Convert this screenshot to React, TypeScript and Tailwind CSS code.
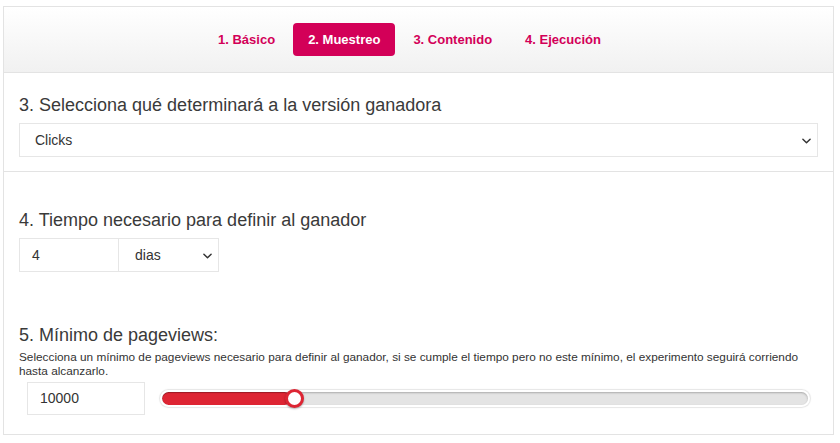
import React from 'react';

const Chevron: React.FC<{ className?: string }> = ({ className }) => (
  <svg viewBox="0 0 10 6" className={className} fill="none" stroke="#333" strokeWidth="1.6" strokeLinecap="round" strokeLinejoin="round">
    <path d="M1 1l4 4 4-4" />
  </svg>
);

const tabs = ['1. Básico', '2. Muestreo', '3. Contenido', '4. Ejecución'];

export default function App() {
  const value = 10000;
  const pct = 20;

  return (
    <div className="min-h-[443px] bg-white pt-[6px] pl-[3px] font-['Liberation_Sans',Arial,sans-serif] text-[#333]">
      <div className="w-[831px] border border-[#e3e3e3]">
        {/* pasos */}
        <div className="h-[66px] border-b border-[#e3e3e3] bg-gradient-to-b from-white to-[#f1f1f1] flex items-center justify-center gap-[3px] pr-[18px]">
          {tabs.map((t, i) => (
            <div
              key={t}
              className={
                i === 1
                  ? 'h-[33px] px-[15px] flex items-center rounded-[4px] bg-[#d30058] text-white text-[13px] font-bold'
                  : 'h-[33px] px-[15px] flex items-center text-[#d30058] text-[13px] font-bold'
              }
            >
              {t}
            </div>
          ))}
        </div>

        {/* 3 */}
        <div className="px-[15px] pt-[22px] pb-[14px] border-b border-[#e3e3e3]">
          <h3 className="text-[18px] leading-[20px] text-[#3a3a3a] mb-[8px]">3. Selecciona qué determinará a la versión ganadora</h3>
          <div className="relative h-[34px] border border-[#e6e6e6] flex items-center pl-[15px] text-[14px]">
            Clicks
            <Chevron className="absolute right-[6px] top-[14px] w-[9px] h-[6px]" />
          </div>
        </div>

        {/* 4 */}
        <div className="px-[15px] pt-[38px]">
          <h3 className="text-[18px] leading-[20px] text-[#3a3a3a] mb-[8px]">4. Tiempo necesario para definir al ganador</h3>
          <div className="flex">
            <div className="w-[100px] h-[34px] border border-[#e6e6e6] flex items-center pl-[12px] text-[14px]">4</div>
            <div className="relative w-[100px] h-[34px] border border-l-0 border-[#e6e6e6] flex items-center pl-[16px] text-[14px]">
              dias
              <Chevron className="absolute right-[6px] top-[14px] w-[9px] h-[6px]" />
            </div>
          </div>
        </div>

        {/* 5 */}
        <div className="px-[15px] pt-[52px] pb-[19px]">
          <h3 className="text-[18px] leading-[22px] text-[#3a3a3a] mb-[4px]">5. Mínimo de pageviews:</h3>
          <p className="text-[11.8px] leading-[14px] text-[#333]">
            Selecciona un mínimo de pageviews necesario para definir al ganador, si se cumple el tiempo pero no este mínimo, el experimento seguirá corriendo hasta alcanzarlo.
          </p>
          <div className="flex items-center mt-[4px]">
            <div className="ml-[8px] w-[118px] h-[33px] border border-[#e6e6e6] flex items-center pl-[12px] text-[14px]">{value}</div>
            <div className="ml-[15px] relative w-[650px] h-[17px] rounded-full bg-white shadow-[0_0_1px_1px_#e6e6e6] p-[2px]">
              <div className="h-full rounded-full bg-[#e4e4e4] shadow-[inset_0_1px_2px_rgba(0,0,0,0.25)] overflow-hidden">
                <div className="h-full rounded-full bg-[#dd2533] shadow-[inset_0_1px_1px_rgba(0,0,0,0.3)]" style={{ width: `${pct}%` }} />
              </div>
              <div
                className="absolute top-[-1px] w-[19px] h-[19px] -ml-[9px] rounded-full bg-white border-[3px] border-[#dd2533] shadow-[0_1px_2px_rgba(0,0,0,0.3)]"
                style={{ left: `calc(${pct}% + 4px)` }}
              />
            </div>
          </div>
        </div>
      </div>
    </div>
  );
}
